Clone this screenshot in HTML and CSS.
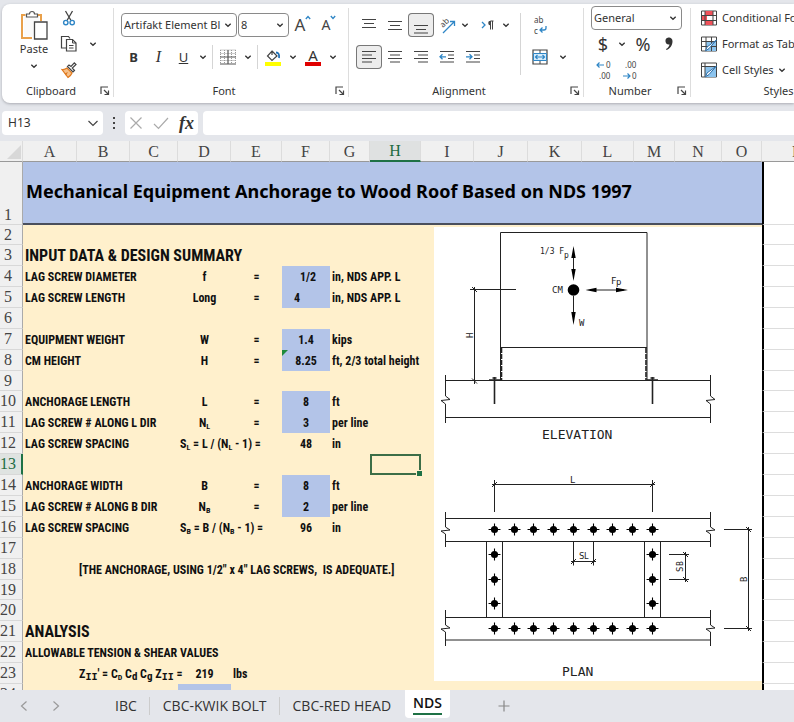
FILE: index.html
```html
<!DOCTYPE html>
<html lang="en">
<head>
<meta charset="utf-8">
<meta name="viewport" content="width=device-width, initial-scale=1">
<title>Anchorage to Wood Roof</title>
<link rel="stylesheet" href="styles.css">
</head>
<body>
<svg class="defs" aria-hidden="true">
  <symbol id="chev" viewBox="0 0 8 8"><path d="M1.3 2.7 4 5.3 6.7 2.7" fill="none" stroke="#333" stroke-width="1.3"/></symbol>
  <symbol id="launch" viewBox="0 0 10 10"><path d="M1 8V1h7M4 4l4 4M8.5 4.5v4h-4" fill="none" stroke="#444" stroke-width="1.2"/></symbol>
  <symbol id="bolt" viewBox="-6 -6 12 12"><circle r="3.3"/><path d="M-5.5 0h11M0-5.5v11" stroke="#000" stroke-width="1"/></symbol>
</svg>

<header class="ribbon">
  <section class="group clipboard">
    <div class="tools">
      <button class="paste" type="button">
        <svg width="28" height="31" viewBox="0 0 28 31"><path d="M5.500 5H2v23h10M17 5h4v6" fill="none" stroke="#e9a04a" stroke-width="2"/><path d="M4 6.500h15v20H4z" fill="#fafafa"/><path d="M6.500 7V4h3a2.500 2.500 0 0 1 5 0h3v3z" fill="#fff" stroke="#555" stroke-width="1.200"/><path d="M14.500 12h12.500v17H14.500z" fill="#fff" stroke="#444" stroke-width="1.300"/></svg>
        <span>Paste</span>
        <svg class="chev" ><use href="#chev"/></svg>
      </button>
      <div class="stack">
        <div class="line"><button type="button" aria-label="Cut"><svg width="16" height="18" viewBox="0 0 16 18"><path d="M4.500 2l5.500 9.500M11.500 2 6 11.500" fill="none" stroke="#444" stroke-width="1.300"/><g fill="none" stroke="#2f86c6" stroke-width="1.400"><circle cx="4.800" cy="13.600" r="2.200"/><circle cx="11.200" cy="13.600" r="2.200"/></g></svg></button></div>
        <div class="line"><button type="button" aria-label="Copy"><svg width="18" height="18" viewBox="0 0 18 18"><path d="M6 13H1.500V1.500h7l1.500 2" fill="none" stroke="#444" stroke-width="1.200"/><path d="M6.500 4.500h6l3.500 3.500v8H6.500z" fill="#fff" stroke="#444" stroke-width="1.200"/><path d="M12.500 4.500V8H16M9 10.500h4.500M9 13h4.500" fill="none" stroke="#444"/></svg></button><button class="drop" type="button" aria-label="Copy options"><svg class="chev"><use href="#chev"/></svg></button></div>
        <div class="line"><button type="button" aria-label="Format Painter"><svg width="18" height="18" viewBox="0 0 18 18"><path d="M2 8.500c2 .3 3.500-.3 5-1.500l5 5c-.5 1.500-2 3-4 4.500z" fill="#f6c08a" stroke="#e07a1f" stroke-width="1.200"/><path d="M4.500 12.500 8 11l-2 3.500z" fill="#e07a1f"/><path d="M7.500 5.500 13 11l1.500-1.500L12.300 7 16 3.500 14.300 1.800 11 5.500 9 4z" fill="#fff" stroke="#444" stroke-width="1.200"/></svg></button></div>
      </div>
    </div>
    <footer><span>Clipboard</span><button type="button" aria-label="Clipboard settings"><svg class="launch"><use href="#launch"/></svg></button></footer>
  </section>

  <section class="group font">
    <div class="tools rows">
      <div class="line">
        <label class="pick family"><select aria-label="Font"><option>Artifakt Element Bl</option></select><svg class="chev"><use href="#chev"/></svg></label>
        <label class="pick size"><select aria-label="Font size"><option>8</option></select><svg class="chev"><use href="#chev"/></svg></label>
        <button type="button" class="grow" aria-label="Increase font size">A<svg width="6" height="10" viewBox="0 0 6 10"><path d="M.8 6 3 3.500 5.200 6" fill="none" stroke="#2f86c6" stroke-width="1.300"/></svg></button>
        <button type="button" class="shrink" aria-label="Decrease font size">A<svg width="6" height="10" viewBox="0 0 6 10"><path d="M.8 3 3 5.500 5.200 3" fill="none" stroke="#2f86c6" stroke-width="1.300"/></svg></button>
      </div>
      <div class="line">
        <button type="button" class="glyph"><b>B</b></button>
        <button type="button" class="glyph ital"><i>I</i></button>
        <button type="button" class="glyph"><u>U</u></button>
        <button class="drop" type="button" aria-label="Underline options"><svg class="chev"><use href="#chev"/></svg></button>
        <span class="rule"></span>
        <button type="button" aria-label="Borders"><svg width="16" height="16" viewBox="0 0 16 16"><path d="M.5 1h15M.5 4.500h15M.5 11.500h15M.5 1v14M15.500 1v14M4.500 1v14M11.500 1v14" stroke="#999" stroke-dasharray="1 1"/><path d="M0 15h16M0 8h16M8 1v14" stroke="#555" stroke-width="1.200"/></svg></button>
        <button class="drop" type="button" aria-label="Border options"><svg class="chev"><use href="#chev"/></svg></button>
        <span class="rule"></span>
        <button type="button" aria-label="Fill colour"><svg width="18" height="18" viewBox="0 0 18 18"><path d="M1 14h16v4H1z" fill="#ffff00"/><path d="M8 3l5 5-5 4.500L3.500 8zM8 3v4" fill="#fff" stroke="#444" stroke-width="1.200"/><path d="M12 4.500c2.500 0 3.500 2 3 5.500" fill="none" stroke="#1f6fb5" stroke-width="1.800"/></svg></button>
        <button class="drop" type="button" aria-label="Fill options"><svg class="chev"><use href="#chev"/></svg></button>
        <button type="button" class="ink">A</button>
        <button class="drop" type="button" aria-label="Font colour options"><svg class="chev"><use href="#chev"/></svg></button>
      </div>
    </div>
    <footer><span>Font</span><button type="button" aria-label="Font settings"><svg class="launch"><use href="#launch"/></svg></button></footer>
  </section>

  <section class="group align">
    <div class="tools">
      <div class="rows">
        <div class="line">
          <button type="button" aria-label="Top align"><svg width="16" height="18" viewBox="0 0 16 18"><path d="M1 3.500h14M3 7.500h10M1 11.500h14" stroke="#444" stroke-width="1.200"/></svg></button>
          <button type="button" aria-label="Middle align"><svg width="16" height="18" viewBox="0 0 16 18"><path d="M1 5.500h14M3 9.500h10M1 13.500h14" stroke="#444" stroke-width="1.200"/></svg></button>
          <button type="button" class="on" aria-label="Bottom align"><svg width="16" height="18" viewBox="0 0 16 18"><path d="M1 9.500h14M3 13.500h10M1 17h14" stroke="#444" stroke-width="1.200"/></svg></button>
          <button type="button" aria-label="Orientation"><svg width="18" height="18" viewBox="0 0 18 18"><path d="M5 17 16.500 5.500M16.500 10V5.500H12" fill="none" stroke="#2f86c6" stroke-width="1.300"/><text transform="translate(5 12) rotate(-45)" class="mini">ab</text></svg></button>
          <button class="drop slim" type="button" aria-label="Orientation options"><svg class="chev"><use href="#chev"/></svg></button>
          <button type="button" class="para" aria-label="Text direction"><svg width="14" height="14" viewBox="0 0 14 14"><path d="M1 4l3 3-3 3" fill="none" stroke="#2f86c6" stroke-width="1.300"/><path d="M9.500 11.500V3h3M11.500 11.500V3" fill="none" stroke="#444"/><path d="M9.500 2.800a2.300 2.300 0 0 0 0 4.600z" fill="#444"/></svg></button>
          <button class="drop slim" type="button" aria-label="Direction options"><svg class="chev"><use href="#chev"/></svg></button>
        </div>
        <div class="line">
          <button type="button" class="on" aria-label="Align left"><svg width="16" height="16" viewBox="0 0 16 16"><path d="M1 2.500h14M1 6h10M1 9.500h14M1 13h10" stroke="#444" stroke-width="1.200"/></svg></button>
          <button type="button" aria-label="Centre"><svg width="16" height="16" viewBox="0 0 16 16"><path d="M1 2.500h14M3 6h10M1 9.500h14M3 13h10" stroke="#444" stroke-width="1.200"/></svg></button>
          <button type="button" aria-label="Align right"><svg width="16" height="16" viewBox="0 0 16 16"><path d="M1 2.500h14M5 6h10M1 9.500h14M5 13h10" stroke="#444" stroke-width="1.200"/></svg></button>
          <button type="button" aria-label="Decrease indent"><svg width="16" height="16" viewBox="0 0 16 16"><path d="M1 2.500h14M9 6h6M9 9.500h6M1 13h14" stroke="#444" stroke-width="1.200"/><path d="M7 7.800H1M3.500 5.300 1 7.800l2.500 2.500" fill="none" stroke="#2f86c6" stroke-width="1.300"/></svg></button>
          <button type="button" aria-label="Increase indent"><svg width="16" height="16" viewBox="0 0 16 16"><path d="M1 2.500h14M9 6h6M9 9.500h6M1 13h14" stroke="#444" stroke-width="1.200"/><path d="M1 7.800h6M4.500 5.300 7 7.800l-2.500 2.500" fill="none" stroke="#2f86c6" stroke-width="1.300"/></svg></button>
        </div>
      </div>
      <span class="rule tall"></span>
      <div class="rows">
        <div class="line"><button type="button" aria-label="Wrap text"><svg width="16" height="24" viewBox="0 0 16 24"><text x="2" y="10" class="mini">ab</text><text x="2" y="21" class="mini">c</text><path d="M14 13v2q0 2-2 2H8M10.500 14.500 8 17l2.500 2.500" fill="none" stroke="#2f86c6" stroke-width="1.300"/></svg></button></div>
        <div class="line"><button type="button" aria-label="Merge and centre"><svg width="16" height="16" viewBox="0 0 16 16"><path d="M1 1h14v14H1z" fill="#fff" stroke="#444" stroke-width="1.200"/><path d="M1.500 4.500h13v7h-13z" fill="#d5ebfa" stroke="#2f86c6"/><path d="M8 1v3M8 12v3" stroke="#444"/><path d="M3.500 8h9M5.500 6 3.500 8l2 2M10.500 6l2 2-2 2" fill="none" stroke="#2f86c6" stroke-width="1.200"/></svg></button><button class="drop merge" type="button" aria-label="Merge options"><svg class="chev"><use href="#chev"/></svg></button></div>
      </div>
    </div>
    <footer><span>Alignment</span><button type="button" aria-label="Alignment settings"><svg class="launch"><use href="#launch"/></svg></button></footer>
  </section>

  <section class="group number">
    <div class="tools stack">
      <div class="line"><label class="pick format"><select aria-label="Number format"><option>General</option></select><svg class="chev"><use href="#chev"/></svg></label></div>
      <div class="line symbols"><button type="button">$</button><button class="drop" type="button" aria-label="Currency options"><svg class="chev"><use href="#chev"/></svg></button><button type="button" class="pct">%</button><button type="button" aria-label="Comma style"><svg width="10" height="16" viewBox="0 0 10 16"><path d="M4.500 1.500a3.500 3.500 0 0 1 4 3.700C8.500 9.500 6 12.500 2.500 14L2 13c2-1 3.300-2.700 3.500-4.500A3.500 3.500 0 1 1 4.500 1.500z" fill="#333"/></svg></button></div>
      <div class="line"><button type="button" aria-label="Increase decimal"><svg width="18" height="22" viewBox="0 0 18 22"><path d="M9 6H2M4.500 3.500 2 6l2.500 2.500" fill="none" stroke="#2f86c6" stroke-width="1.200"/><text x="11" y="9" class="mini">0</text><text x="4" y="20" class="mini">.00</text></svg></button><button type="button" aria-label="Decrease decimal"><svg width="18" height="22" viewBox="0 0 18 22"><path d="M2 17h7M6.500 14.500 9 17l-2.500 2.500" fill="none" stroke="#2f86c6" stroke-width="1.200"/><text x="4" y="9" class="mini">.00</text><text x="11" y="20" class="mini">0</text></svg></button></div>
    </div>
    <footer><span>Number</span><button type="button" aria-label="Number settings"><svg class="launch"><use href="#launch"/></svg></button></footer>
  </section>

  <section class="group looks">
    <div class="tools stack">
      <div class="line"><button type="button" class="wide"><svg width="18" height="16" viewBox="0 0 18 16"><path d="M1.500 1h15v14h-15z" fill="#fff" stroke="#444"/><path d="M5 1h8v4.500H5zM2 5.500h5V10H2zM5 10.500h8V15H5z" fill="#f0525a"/><path d="M1.500 5.500h15M1.500 10.500h15M5 1v14M13 1v14" stroke="#444" fill="none"/></svg><span>Conditional Formatting</span></button></div>
      <div class="line"><button type="button" class="wide"><svg width="18" height="16" viewBox="0 0 18 16"><path d="M1.500 1h15v14h-15z" fill="#fff" stroke="#444"/><path d="M6 5.500h10V15H6z" fill="#8cc4ee"/><path d="M1.500 5.500h15M1.500 10.500h15M6 1v14M11.500 1v14" stroke="#444" fill="none"/><path d="M16.500 4 9 12.500l-3.500 2.300L7 11z" fill="#fff" stroke="#2f6fa8"/></svg><span>Format as Table</span></button></div>
      <div class="line"><button type="button" class="wide"><svg width="18" height="16" viewBox="0 0 18 16"><path d="M1.500 1h15v14h-15z" fill="#fff" stroke="#444"/><path d="M5 5h11v10H5z" fill="#8cc4ee"/><path d="M1.500 4.500h15M5 1v14" stroke="#444" fill="none"/><path d="M16.500 4 9 12.500l-3.500 2.300L7 11z" fill="#fff" stroke="#2f6fa8"/></svg><span>Cell Styles</span><svg class="chev"><use href="#chev"/></svg></button></div>
    </div>
    <footer><span>Styles</span></footer>
  </section>
</header>

<div class="formula">
  <label class="name"><input type="text" value="H13" aria-label="Name box"><svg width="12" height="12" viewBox="0 0 12 12"><path d="M1.500 4 6 8.500 10.500 4" fill="none" stroke="#444" stroke-width="1.200"/></svg></label>
  <svg class="dots" width="4" height="14" viewBox="0 0 4 14"><path d="M1 1h2v2H1zM1 6h2v2H1zM1 11h2v2H1z" fill="#444"/></svg>
  <div class="entry">
    <button type="button" aria-label="Cancel"><svg width="14" height="14" viewBox="0 0 14 14"><path d="M1.500 1.500l11 11M12.500 1.500l-11 11" stroke="#aaa" stroke-width="1.200"/></svg></button>
    <button type="button" aria-label="Enter"><svg width="16" height="14" viewBox="0 0 16 14"><path d="M1 8l4.500 4.500L15 2" fill="none" stroke="#aaa" stroke-width="1.200"/></svg></button>
    <button type="button" class="fx">fx</button>
  </div>
  <input class="bar" type="text" aria-label="Formula bar">
</div>

<main class="sheet">
<table>
  <colgroup><col class="c23"><col class="c54"><col class="c53"><col class="c48"><col class="c53"><col class="c51"><col class="c48"><col class="c40"><col class="c51"><col class="c53"><col class="c54"><col class="c54"><col class="c52"><col class="c41"><col class="c47"><col class="c40"><col></colgroup>
  <thead><tr><th class="corner"><svg width="14" height="14" viewBox="0 0 14 14"><path d="M14 0v14H0z" fill="#d8d8d8"/></svg></th><th>A</th><th>B</th><th>C</th><th>D</th><th>E</th><th>F</th><th>G</th><th class="cur">H</th><th>I</th><th>J</th><th>K</th><th>L</th><th>M</th><th>N</th><th>O</th><th>P</th></tr></thead>
  <tbody>
  <tr class="title"><th>1</th><td colspan="15">Mechanical Equipment Anchorage to Wood Roof Based on NDS 1997</td><td class="out"></td></tr>
  <tr class="short"><th>2</th><td colspan="15"></td><td class="out"></td></tr>
  <tr><th>3</th><td colspan="15" class="head">INPUT DATA &amp; DESIGN SUMMARY</td><td class="out"></td></tr>
  <tr><th>4</th><td colspan="3">LAG SCREW DIAMETER</td><td class="mid">f</td><td class="mid">=</td><td class="in right">1/2</td><td colspan="9">in, NDS APP. L</td><td class="out"></td></tr>
  <tr><th>5</th><td colspan="3">LAG SCREW LENGTH</td><td class="mid">Long</td><td class="mid">=</td><td class="in left">4</td><td colspan="9">in, NDS APP. L</td><td class="out"></td></tr>
  <tr><th>6</th><td colspan="15"></td><td class="out"></td></tr>
  <tr><th>7</th><td colspan="3">EQUIPMENT WEIGHT</td><td class="mid">W</td><td class="mid">=</td><td class="in mid">1.4</td><td colspan="9">kips</td><td class="out"></td></tr>
  <tr><th>8</th><td colspan="3">CM HEIGHT</td><td class="mid">H</td><td class="mid">=</td><td class="in mid flag">8.25</td><td colspan="9">ft, 2/3 total height</td><td class="out"></td></tr>
  <tr class="short"><th>9</th><td colspan="15"></td><td class="out"></td></tr>
  <tr><th>10</th><td colspan="3">ANCHORAGE LENGTH</td><td class="mid">L</td><td class="mid">=</td><td class="in mid">8</td><td colspan="9">ft</td><td class="out"></td></tr>
  <tr><th>11</th><td colspan="3">LAG SCREW # ALONG L DIR</td><td class="mid">N<sub>L</sub></td><td class="mid">=</td><td class="in mid">3</td><td colspan="9">per line</td><td class="out"></td></tr>
  <tr><th>12</th><td colspan="3">LAG SCREW SPACING</td><td colspan="2">S<sub>L</sub> = L / (N<sub>L</sub> - 1) =</td><td class="mid">48</td><td colspan="9">in</td><td class="out"></td></tr>
  <tr class="cur"><th>13</th><td colspan="7"></td><td class="picked"></td><td colspan="7"></td><td class="out"></td></tr>
  <tr><th>14</th><td colspan="3">ANCHORAGE WIDTH</td><td class="mid">B</td><td class="mid">=</td><td class="in mid">8</td><td colspan="9">ft</td><td class="out"></td></tr>
  <tr><th>15</th><td colspan="3">LAG SCREW # ALONG B DIR</td><td class="mid">N<sub>B</sub></td><td class="mid">=</td><td class="in mid">2</td><td colspan="9">per line</td><td class="out"></td></tr>
  <tr><th>16</th><td colspan="3">LAG SCREW SPACING</td><td colspan="2">S<sub>B</sub> = B / (N<sub>B</sub> - 1) =</td><td class="mid">96</td><td colspan="9">in</td><td class="out"></td></tr>
  <tr><th>17</th><td colspan="15"></td><td class="out"></td></tr>
  <tr><th>18</th><td></td><td colspan="14">[THE ANCHORAGE, USING 1/2" x 4" LAG SCREWS,&nbsp; IS ADEQUATE.]</td><td class="out"></td></tr>
  <tr class="short"><th>19</th><td colspan="15"></td><td class="out"></td></tr>
  <tr><th>20</th><td colspan="15"></td><td class="out"></td></tr>
  <tr><th>21</th><td colspan="15" class="head">ANALYSIS</td><td class="out"></td></tr>
  <tr><th>22</th><td colspan="15">ALLOWABLE TENSION &amp; SHEAR VALUES</td><td class="out"></td></tr>
  <tr><th>23</th><td></td><td colspan="2">Z<sub class="ii">II</sub>' = C<sub>D</sub> C<sub class="big">d</sub> C<sub class="big">g</sub> Z<sub class="ii">II</sub> =</td><td class="mid">219</td><td colspan="11">lbs</td><td class="out"></td></tr>
  <tr><th>24</th><td colspan="3"></td><td class="in"></td><td colspan="11"></td><td class="out"></td></tr>
  </tbody>
</table>
<svg class="drawing" viewBox="434 227 328 454" role="img" aria-label="Elevation and plan of the anchorage">
  <g fill="none" stroke="#222" stroke-width="1">
    <path d="M500.500 380V232.500h146.500V380M500.500 347.500h146.500"/>
    <path d="M501.500 348v32M646 348v32" stroke-width="1.600" stroke-dasharray="5 1"/>
    <path d="M445.500 380.500h265M445.500 417.500h265"/>
    <path d="M445.500 375v21l4.500 3.500-9 1 4.500 3.500v19M710.500 375v21l4.500 3.500-9 1 4.500 3.500v19"/>
    <path d="M474.500 287v97M470 289.500h46M472 287l5 5M472 378.500l5 5"/>
    <path d="M489 380h12M647 380h11M492.500 378h4M650.500 378h4" stroke-width="1.600"/>
    <path d="M494.500 377v27M652.500 377v27" stroke-width="1.600"/>
    <path d="M573.500 250v28M573.500 296v24M590 290h34"/>
    <path d="M494.500 480v32M652.500 480v32M492 484.500h163M492 487l5-5M650 487l5-5"/>
    <path d="M445.500 518.500h265M445.500 541.500h265M445.500 617.500h265M445.500 640h265"/>
    <path d="M445.500 512v15l4.500 3-9 1 4.500 3v13M710.500 512v15l4.500 3-9 1 4.500 3v13M445.500 610v15l4.500 3-9 1 4.500 3v14M710.500 610v15l4.500 3-9 1 4.500 3v14"/>
    <path d="M486.500 541.500v76M502.500 541.500v76M644.500 541.500v76M660.500 541.500v76"/>
    <path d="M573.500 541.500v24M593.500 541.500v24M571 561.500h25M571 564l5-5M591 564l5-5"/>
    <path d="M669 554.500h20M669 579.500h20M685.500 552v30M683 552l5 5M683 577l5 5"/>
    <path d="M724 529.500h28M724 628.500h28M748.500 527v104M746 527l5 5M746 626l5 5"/>
  </g>
  <circle cx="573.500" cy="290" r="5.800"/>
  <path d="M573.500 246l2.200 12h-4.400zM573.500 281l2.200-12h-4.400zM573.500 325l2.200-13h-4.400zM585.500 290l11-2.200v4.400zM628 290l-12-2.200v4.400z"/>
  <g id="bolts">
    <g id="row">
      <use href="#bolt" x="488" y="523" width="13" height="13"/><use href="#bolt" x="508" y="523" width="13" height="13"/><use href="#bolt" x="527" y="523" width="13" height="13"/><use href="#bolt" x="547" y="523" width="13" height="13"/><use href="#bolt" x="567" y="523" width="13" height="13"/><use href="#bolt" x="587" y="523" width="13" height="13"/><use href="#bolt" x="606" y="523" width="13" height="13"/><use href="#bolt" x="626" y="523" width="13" height="13"/><use href="#bolt" x="646" y="523" width="13" height="13"/>
    </g>
    <use href="#row" y="99"/>
    <use href="#bolt" x="488" y="548" width="13" height="13"/><use href="#bolt" x="488" y="573" width="13" height="13"/><use href="#bolt" x="488" y="597" width="13" height="13"/>
    <use href="#bolt" x="646" y="548" width="13" height="13"/><use href="#bolt" x="646" y="573" width="13" height="13"/><use href="#bolt" x="646" y="597" width="13" height="13"/>
  </g>
  <text x="540" y="254" class="tiny">1/3 F</text><text x="564" y="258" class="tiny">p</text>
  <text x="611" y="284">F</text><text x="616" y="285">p</text>
  <text x="552" y="293">CM</text><text x="579" y="326">W</text>
  <text transform="translate(473 338) rotate(-90)">H</text>
  <text x="570" y="483">L</text>
  <text x="579" y="559">S</text><text x="584" y="559" class="tiny">L</text>
  <text transform="translate(683 572) rotate(-90)">S</text><text transform="translate(683 566) rotate(-90)" class="tiny">B</text>
  <text transform="translate(747 582) rotate(-90)">B</text>
  <text x="542" y="439" class="cap">ELEVATION</text>
  <text x="562" y="676" class="cap">PLAN</text>
</svg>
</main>

<nav class="tabs">
  <button type="button" class="step" aria-label="Previous sheet"><svg width="8" height="12" viewBox="0 0 8 12"><path d="M6.500 1.500 1.500 6l5 4.500" fill="none" stroke="#999" stroke-width="1.200"/></svg></button>
  <button type="button" class="step" aria-label="Next sheet"><svg width="8" height="12" viewBox="0 0 8 12"><path d="M1.500 1.500l5 4.500-5 4.500" fill="none" stroke="#999" stroke-width="1.200"/></svg></button>
  <a href="#ibc" class="tab first">IBC</a>
  <a href="#kwik" class="tab">CBC-KWIK BOLT</a>
  <a href="#red" class="tab">CBC-RED HEAD</a>
  <a href="#nds" class="tab active"><span>NDS</span></a>
  <button type="button" class="add" aria-label="New sheet"><svg width="12" height="12" viewBox="0 0 12 12"><path d="M6 .5v11M.5 6h11" stroke="#888" stroke-width="1.200"/></svg></button>
</nav>
</body>
</html>
```
FILE: styles.css
```css
* { box-sizing: border-box; }
body {
  margin: 0;
  height: 100vh;
  display: flex;
  flex-direction: column;
  overflow: hidden;
  background: #e4e6eb;
  color: #333;
  font: 11px/16px "Noto Sans", "Open Sans", sans-serif;
}
button, select, input { font: inherit; color: inherit; margin: 0; padding: 0; border: 0; background: none; }
svg { display: block; flex: none; }
.defs { position: absolute; width: 0; height: 0; }
.chev { width: 8px; height: 8px; }
.launch { width: 10px; height: 10px; }
.mini { font-size: 8px; fill: #444; }

/* Ribbon */
.ribbon {
  flex: none;
  display: flex;
  height: 99px;
  margin: 4px 0 0 2px;
  overflow: hidden;
  background: #fff;
  border-radius: 8px 0 0 8px;
  box-shadow: 0 1px 3px #a9abb2;
}
.group { flex: none; display: flex; flex-direction: column; position: relative; }
.group + .group::before { content: ""; position: absolute; left: 0; top: 4px; bottom: 6px; width: 1px; background: #ddd; }
.clipboard { width: 111px; }
.font, .align { width: 235px; }
.number { width: 107px; }
.looks { width: 180px; }
.tools { flex: 1; display: flex; }
.font .tools, .align .tools { padding: 9px 0 0 8px; }
.rows { display: flex; flex-direction: column; gap: 8px; }
.line { display: flex; align-items: center; height: 24px; }
.stack { display: flex; flex-direction: column; gap: 2px; padding-top: 2px; }
.line button { display: flex; align-items: center; justify-content: center; width: 26px; height: 24px; }
.line .drop { width: 14px; }
.line .slim { width: 9px; }
.line .merge { width: 20px; }
.group footer { display: flex; align-items: center; height: 22px; padding: 0 3px 3px 0; }
.group footer span { flex: 1; text-align: center; }
.paste { display: flex; flex-direction: column; align-items: center; width: 44px; margin-left: 10px; padding-top: 6px; font-size: 11px; }
.paste .chev { margin-top: 5px; }
.clipboard .drop { width: 22px; }
.rule { width: 1px; height: 24px; margin: 0 2px; background: #d5d5d5; }
.rule.tall { height: 62px; margin: 0 6px 0 10px; }
.pick { display: flex; align-items: center; height: 24px; margin-right: 1px; border: 1px solid #8a8a8a; border-radius: 4px; padding: 0 4px 0 2px; }
.pick select { appearance: none; flex: 1; min-width: 0; overflow: hidden; }
.family { width: 116px; }
.size { width: 51px; }
.format { width: 91px; }
.line .grow, .line .shrink { color: #444; font-size: 17px; align-items: flex-start; line-height: 24px; }
.line .shrink { font-size: 14px; }
.line .glyph { width: 25px; font-size: 13px; }
.line .ital { font-family: "Liberation Serif", serif; font-size: 16px; }
.line .ink { height: 18px; border-bottom: 4px solid #e00000; width: 16px; margin: 0 5px; font-size: 15px; line-height: 14px; }
.on { background: #ededed; border-radius: 4px; box-shadow: inset 0 0 0 1px #777; }
.line .para { margin-left: 6px; }
.number .tools { padding-left: 8px; }
.line.symbols { font-size: 18px; }
.symbols button { width: 24px; }
.symbols .pct { margin: 0 2px; }
.looks .tools { padding-left: 10px; }
.line .wide { width: auto; justify-content: flex-start; gap: 4px; white-space: nowrap; }

/* Formula bar */
.formula { flex: none; display: flex; align-items: center; height: 38px; padding: 1px 0 0 2px; }
.name, .entry, .bar { height: 24px; background: #fff; border-radius: 4px; }
.name { display: flex; align-items: center; width: 101px; padding: 0 4px 0 6px; }
.name input { flex: 1; min-width: 0; font-size: 12px; }
.dots { margin: 0 9px; }
.entry { display: flex; align-items: center; width: 73px; padding: 0 4px; justify-content: space-between; margin-right: 5px; }
.fx { font: italic bold 18px/20px "Liberation Serif", serif; color: #333; }
.bar { flex: 1; min-width: 0; border-radius: 4px 0 0 4px; }

/* Sheet */
.sheet { flex: 1; min-height: 0; position: relative; overflow: hidden; background: #fff; }
table { width: 100%; min-width: 832px; table-layout: fixed; border-spacing: 0; border-collapse: separate; }
.c23 { width: 23px; } .c40 { width: 40px; } .c41 { width: 41px; } .c47 { width: 47px; } .c48 { width: 48px; }
.c51 { width: 51px; } .c52 { width: 52px; } .c53 { width: 53px; } .c54 { width: 54px; }
tr { height: 21px; }
.short { height: 20px; }
th, td { padding: 0; white-space: nowrap; }
th { font: 16px/18px "Liberation Serif", serif; color: #444; background: #f0f0f0; }
thead th { height: 21px; padding-top: 1px; border-bottom: 1px solid #999; border-right: 1px solid #dcdcdc; }
thead .cur { background: #dfe1e1; color: #1e6b41; border-bottom: 2px solid #1e7145; }
.corner svg { margin-left: 7px; }
tbody th { padding-right: 6px; border-right: 1px solid #aaa; border-bottom: 1px solid #d8d8d8; text-align: center; }
tbody .cur th { background: #dfe3e1; color: #1e6b41; border-right: 2px solid #1e7145; }
td { padding-left: 2px; text-align: left; background: #fff0cc; color: #111; font: bold 12px/16px "Roboto Condensed", "Noto Sans", sans-serif; }
td.mid { padding: 0; text-align: center; }
td.in { background: #b3c4e8; }
td.left { padding-left: 12px; }
td.right { padding-right: 14px; text-align: right; }
td.head { font-size: 16px; }
td.out { background: #fff; border-left: 2px solid #000; border-bottom: 1px solid #ddd; }
.title { height: 63px; }
.title th { vertical-align: bottom; }
.title td { padding-left: 3px; background: #b3c4e8; border-bottom: 2px solid #4a4f5c; font: bold 18px/24px "Noto Sans", sans-serif; color: #000; }
.title td:nth-child(2) { padding-bottom: 4px; }
.title td.out { background: #fff; border-bottom: 1px solid #ddd; }
sub { font-size: 8px; line-height: 0; vertical-align: -2px; }
sub.big { font-size: 11px; }
sub.ii { font: bold 10px/0 "Liberation Mono", monospace; }
.picked { position: relative; box-shadow: inset 0 0 0 2px #3c6e47; }
.picked::after { content: ""; position: absolute; right: -2px; bottom: -2px; width: 5px; height: 5px; background: #1e7145; border: 1px solid #fff0cc; }
.flag { position: relative; }
.flag::before { content: ""; position: absolute; left: 0; top: 0; border-top: 6px solid #1e8a3c; border-right: 6px solid transparent; }
.drawing { position: absolute; left: 434px; top: 86px; width: 328px; height: 454px; background: #fff; }
.drawing text { font: 9px "DejaVu Sans Mono", monospace; fill: #222; }
.drawing .tiny { font-size: 8px; }
.drawing .cap { font-size: 13px; }

/* Sheet tabs */
.tabs { flex: none; display: flex; align-items: center; height: 32px; padding-left: 8px; font: 14px/18px "Open Sans", sans-serif; }
.step { display: flex; justify-content: center; width: 32px; }
.tab { padding: 0 12px 0 13px; border-left: 1px solid #ccc; color: #333; text-decoration: none; }
.tab.first { margin-left: 30px; border-left: 0; }
.tab.active { align-self: flex-start; height: 28px; padding: 4px 8px 0; margin: 0 4px 0 2px; border: 0; border-radius: 0 0 4px 4px; background: #fff; color: #111; font-weight: 600; }
.tab.active span { display: block; padding-bottom: 1px; border-bottom: 2px solid #1e7145; }
.add { display: flex; margin-left: 44px; }
```
